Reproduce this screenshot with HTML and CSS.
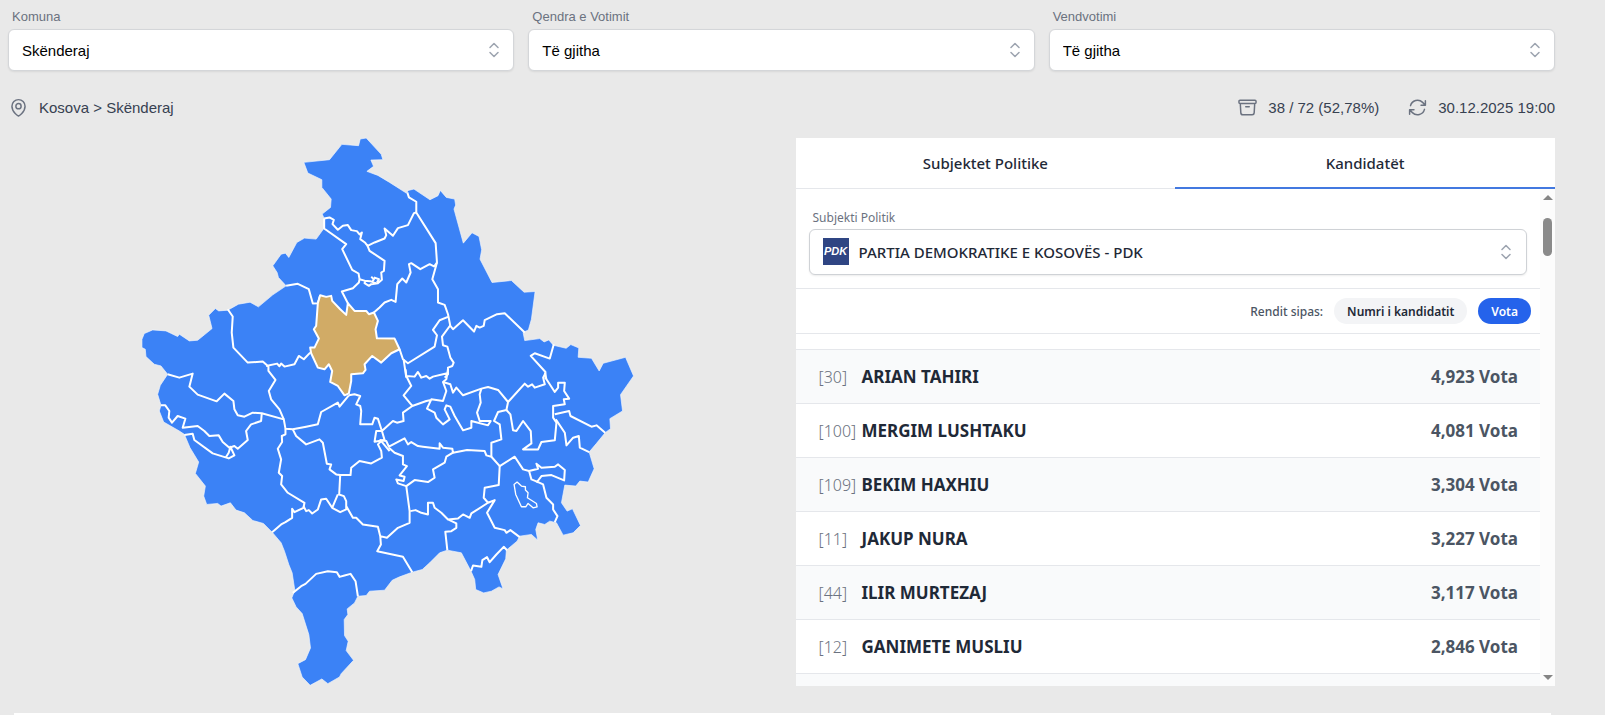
FILE: index.html
```html
<!DOCTYPE html>
<html lang="sq">
<head>
<meta charset="utf-8">
<title>Rezultatet - Skënderaj</title>
<link rel="stylesheet" href="styles.css">
</head>
<body>
<svg class="defs" aria-hidden="true">
  <symbol id="updown" viewBox="0 0 12 18"><path d="M2 6.500 6 2.500 10 6.500M2 11.500 6 15.500 10 11.500"/></symbol>
</svg>
<div class="page">
  <form class="filters">
    <div class="field">
      <label for="komuna">Komuna</label>
      <div class="control"><select id="komuna"><option>Skënderaj</option></select><svg class="updown"><use href="#updown"/></svg></div>
    </div>
    <div class="field">
      <label for="qendra">Qendra e Votimit</label>
      <div class="control"><select id="qendra"><option>Të gjitha</option></select><svg class="updown"><use href="#updown"/></svg></div>
    </div>
    <div class="field">
      <label for="vendi">Vendvotimi</label>
      <div class="control"><select id="vendi"><option>Të gjitha</option></select><svg class="updown"><use href="#updown"/></svg></div>
    </div>
  </form>

  <div class="status">
    <div class="item">
      <svg class="icon" viewBox="0 0 24 24"><path d="M15 10.500a3 3 0 1 1-6 0 3 3 0 0 1 6 0Z"/><path d="M19.500 10.500c0 7.142-7.500 11.250-7.500 11.250S4.500 17.642 4.500 10.500a7.500 7.500 0 1 1 15 0Z"/></svg>
      <span>Kosova &gt; Skënderaj</span>
    </div>
    <div class="item push">
      <svg class="icon" viewBox="0 0 24 24"><path d="m20.250 7.500-.625 10.632a2.250 2.250 0 0 1-2.247 2.118H6.622a2.250 2.250 0 0 1-2.247-2.118L3.750 7.500M10 11.250h4M3.375 7.500h17.250c.621 0 1.125-.504 1.125-1.125v-1.500c0-.621-.504-1.125-1.125-1.125H3.375c-.621 0-1.125.504-1.125 1.125v1.500c0 .621.504 1.125 1.125 1.125Z"/></svg>
      <span>38 / 72 (52,78%)</span>
    </div>
    <div class="item">
      <svg class="icon" viewBox="0 0 24 24"><path d="M16.023 9.348h4.992v-.001M2.985 19.644v-4.992m0 0h4.992m-4.993 0 3.181 3.183a8.250 8.250 0 0 0 13.803-3.700M4.031 9.865a8.250 8.250 0 0 1 13.803-3.700l3.181 3.182m0-4.991v4.990"/></svg>
      <span>30.12.2025 19:00</span>
    </div>
  </div>

  <main class="content">
    <svg class="map" viewBox="38 27 1473 1642" role="img" aria-label="Harta e Kosovës">
      <path class="land" d="M523,100 600,92 637,46 687,50 692,30 710,27 755,76 760,92 724,93 732,112 712,127 745,139 780,160 830,192 836,184 853,180 901,212 925,200 932,184 950,205 975,210 978,228 973,240 1001,342 1027,311 1048,322 1056,362 1051,390 1087,460 1145,454 1183,489 1216,487 1205,570 1196,602 1180,610 1185,634 1230,628 1243,638 1257,632 1271,648 1309,657 1323,646 1347,656 1345,684 1385,687 1408,725 1420,702 1487,684 1511,740 1472,796 1478,845 1440,868 1442,898 1426,910 1400,942 1378,968 1393,1018 1375,1058 1350,1055 1338,1070 1305,1067 1295,1120 1312,1145 1328,1138 1352,1188 1330,1210 1300,1217 1280,1180 1260,1175 1245,1185 1225,1180 1218,1200 1224,1232 1205,1215 1170,1220 1162,1235 1130,1262 1128,1288 1105,1335 1120,1378 1108,1372 1085,1385 1062,1390 1038,1380 1035,1350 1024,1325 995,1270 953,1262 930,1270 900,1300 878,1320 848,1328 810,1342 788,1352 765,1382 720,1385 710,1398 685,1400 675,1420 653,1438 655,1455 644,1470 645,1518 656,1535 650,1563 672,1592 635,1632 630,1642 595,1662 577,1648 542,1667 518,1642 505,1602 528,1590 543,1555 538,1515 518,1452 500,1432 487,1405 496,1382 488,1330 478,1305 465,1265 455,1240 428,1208 402,1182 370,1173 345,1150 320,1142 303,1120 275,1130 265,1122 232,1125 223,1100 228,1070 198,1032 208,998 182,955 165,915 150,905 103,878 90,845 95,828 85,795 93,768 115,735 95,710 75,705 50,682 48,660 38,655 38,630 45,613 70,602 110,605 145,622 150,615 180,635 205,633 248,598 238,558 258,538 268,545 295,543 327,525 362,519 387,533 430,497 470,470 447,445 443,430 430,410 455,375 468,372 478,385 502,340 525,327 560,330 583,298 584,268 578,255 603,235 605,210 577,175 577,152 535,132Z"/>
      <g class="borders">
        <path d="M584,268 600,265 613,272 609,285 625,302 640,290 655,288 665,303 682,306 690,316 697,310 692,330 706,340 714,350 735,340 765,328 770,318 765,298 790,320 805,297 835,288 853,252 860,250"/>
        <path d="M584,268V298L650,345 638,360 668,422 687,433 690,450 688,460 670,477 637,487 655,522M572,498 565,522 550,523 538,480 505,464 470,470"/>
        <path d="M714,350 720,365 765,395 763,425 755,430 757,452 745,462 725,465 718,470 705,462 707,455 690,450M705,455 722,456 738,462M725,443 733,450 728,458M733,445 748,450 742,460"/>
        <path d="M733,550 750,535 765,520 785,512 798,518 803,465 818,448 830,460 843,430 838,405 845,402 872,420 900,405 913,412 922,400"/>
        <path d="M295,540 310,562 307,610 312,655 355,700 400,697 417,712V725L438,752 418,785 425,810 450,840 463,870M410,710 443,703 450,711 455,703 465,712 495,705 508,680 523,690 542,670"/>
        <path d="M115,735 150,745 190,733 180,772 205,796 262,816 285,793 312,815 315,840 325,858 345,862 370,850 397,852 463,870 468,898 490,900 530,892 565,885 575,848 625,820 630,832 658,798"/>
        <path d="M95,828 108,828 120,845 118,865 128,880 145,860 168,868 160,895 205,890 225,905 240,920 268,918 280,938 300,955 315,950 325,958 355,932 350,905 365,885 395,875 397,852"/>
        <path d="M165,917 190,913 195,932 250,972 298,987 315,978 303,952 298,970 290,983"/>
        <path d="M468,898V915L457,920 458,938 445,958 455,990 448,1030 458,1040 455,1065 475,1090 525,1120 522,1135 495,1148 488,1138V1165L468,1178 455,1185 428,1208"/>
        <path d="M490,900 500,920 530,945 570,930 580,940 592,1003 605,1005 600,1020 620,1035 632,1037 663,1037 665,1015 690,995 725,1002 757,985 755,965 745,945 755,935 780,965"/>
        <path d="M632,1037 629,1095 643,1100 650,1115V1140L632,1148 608,1135 625,1095M522,1130 530,1145 538,1142 548,1152 565,1140 575,1110 590,1108 608,1135M650,1130 670,1165 680,1165 700,1185 745,1192 752,1220 772,1225 805,1195 840,1180V1145L830,1070M752,1220 754,1245 743,1265 820,1282 848,1328"/>
        <path d="M658,798 675,795 692,800 680,825 692,830 695,845 692,885 728,885 735,865 745,868 757,905 740,905 735,937 765,932 757,905 790,875 802,880 822,875 820,850 848,830"/>
      </g>
      <g class="borders" transform="translate(750 0)">
        <path d="M83,190 88,205 110,218V250L168,342 172,400 158,450 175,480V520L195,527 205,555 212,590 220,600 250,573 283,607 290,590 300,595 312,590 315,573 352,555 375,552 435,610"/>
        <path d="M205,563 180,573 160,602 172,618 165,652 85,702 70,690 60,660M72,690 80,745M212,588 187,622 190,648 203,652 212,685 222,700 218,710 205,715 205,735 195,745M522,645 510,688 465,672 453,680 497,728V750"/>
      </g>
      <g class="borders" transform="translate(750 720)">
        <path d="M78,0 80,20 95,50 72,78 98,110 140,95 155,92M80,20 105,22 115,8 125,25 140,20 150,28 160,22 190,15 203,12 205,0M203,12 200,30 190,38 200,65 190,95 155,90 142,118 165,130 170,145 190,165 210,150 195,120 200,108 212,112 225,140 250,183 275,175 275,155 325,168 333,155 300,155 292,130 303,100 300,75 305,58"/>
        <path d="M190,38 212,45 220,70 230,55 250,78 305,58 325,53 355,62 385,98 435,43 445,52 457,45 465,55 495,45 490,25 497,12M385,98 380,122 355,128 343,155 360,165 365,210 335,220V262"/>
        <path d="M380,122 392,135 400,183 410,185 430,155 453,185 455,222 430,240 475,240 485,218 525,213 530,160 520,145 520,110 555,105 552,90 568,88 553,65 555,40 535,40 535,55 525,68 500,30 495,10M525,135 568,125 572,140 635,172 650,168 676,190"/>
        <path d="M528,150 555,190 560,228 580,205 597,200 600,235 628,248M0,212 20,215 28,232 75,207 85,225 95,218 115,230 130,232 180,238 180,222 190,235 218,238 220,250 262,242 315,245 320,258 335,262 360,290 405,262 430,300 448,305"/>
        <path d="M448,305 455,330 475,338 490,345 500,385 520,405V420L533,440 525,458M448,305 475,298 470,283 485,295 525,292 535,285 555,302 553,333 515,317 485,320 470,340"/>
        <path d="M28,235 45,250 70,260 70,285 82,290 60,318 75,322 72,335 50,330 55,342 80,350 105,332 145,338 165,325 160,300 195,280 200,262 220,250"/>
        <path d="M360,290 357,347 315,355 312,385 325,400 345,392 322,430 345,475 375,482 380,490 392,482 420,503M325,400 275,432 270,445 250,435 235,447 205,450 185,430 165,415 160,400 145,400 145,435 125,430 108,422 92,425M205,450 230,462 230,475 215,485 197,487 203,542M274,605 280,588 305,592 308,572 322,563 330,578 350,555 372,532 382,542"/>
        <path class="thin" d="M403,345 412,338 425,350 437,352 437,362 445,370 443,385 470,402 472,412 460,415 445,402 438,412 425,412 408,375Z"/>
      </g>
      <path class="borders" d="M490,1390 515,1370 528,1363 560,1333 595,1325 622,1328 630,1342 645,1338 663,1333 678,1355 685,1400"/>
      <path class="picked" d="M572,498 565,522 560,590 553,600 568,628 555,655 542,655 545,672 565,715 585,720 598,705 608,725 602,758 625,770 645,798 658,792 665,755 665,735 700,732 708,722 705,705 728,680 755,700 785,672 810,660 795,628 742,627 738,600 745,575 733,550 718,555 710,545 675,545 655,522 650,557 632,540 608,515 605,500 590,503Z"/>
    </svg>

    <section class="panel">
      <nav class="tabs">
        <button type="button" class="tab">Subjektet Politike</button>
        <button type="button" class="tab active">Kandidatët</button>
      </nav>
      <div class="scroller">
        <div class="list">
          <div class="party">
            <label for="subjekti">Subjekti Politik</label>
            <div class="control">
              <span class="logo" aria-hidden="true">PDK</span>
              <select id="subjekti"><option>PARTIA DEMOKRATIKE E KOSOVËS - PDK</option></select>
              <svg class="updown"><use href="#updown"/></svg>
            </div>
          </div>
          <div class="sort">
            <span>Rendit sipas:</span>
            <button type="button" class="pill">Numri i kandidatit</button>
            <button type="button" class="pill on">Vota</button>
          </div>
          <table class="rows">
            <tbody>
              <tr><td class="num">[30]</td><td class="name">ARIAN TAHIRI</td><td class="votes">4,923 Vota</td></tr>
              <tr><td class="num">[100]</td><td class="name">MERGIM LUSHTAKU</td><td class="votes">4,081 Vota</td></tr>
              <tr><td class="num">[109]</td><td class="name">BEKIM HAXHIU</td><td class="votes">3,304 Vota</td></tr>
              <tr><td class="num">[11]</td><td class="name">JAKUP NURA</td><td class="votes">3,227 Vota</td></tr>
              <tr><td class="num">[44]</td><td class="name">ILIR MURTEZAJ</td><td class="votes">3,117 Vota</td></tr>
              <tr><td class="num">[12]</td><td class="name">GANIMETE MUSLIU</td><td class="votes">2,846 Vota</td></tr>
              <tr><td class="num"></td><td class="name"></td><td class="votes"></td></tr>
            </tbody>
          </table>
        </div>
        <div class="bar" aria-hidden="true">
          <svg class="arrow" viewBox="0 0 10 5"><path d="M0 5 5 0 10 5Z"/></svg>
          <span class="thumb"></span>
          <svg class="arrow last" viewBox="0 0 10 5"><path d="M0 0H10L5 5Z"/></svg>
        </div>
      </div>
    </section>
  </main>
  <section class="next"></section>
</div>
</body>
</html>
```
FILE: styles.css
```css
* { box-sizing: border-box; }
html { height: 100%; overflow: hidden; }
body {
  margin: 0;
  height: 100%;
  overflow: hidden;
  background: #e9e9e9;
  color: #1f2937;
  font-family: "Liberation Sans", Arial, sans-serif;
}
button, select { font: inherit; color: inherit; margin: 0; }
.defs { display: none; }
.page {
  display: flex;
  flex-direction: column;
  height: 100vh;
  padding: 8px 50px 0 8px;
}

.filters {
  display: grid;
  grid-template-columns: repeat(3, 1fr);
  gap: 14px;
}
.field label {
  display: block;
  padding-left: 4px;
  margin-bottom: 4px;
  font-size: 13px;
  line-height: 17px;
  color: #6b7280;
}
.control { position: relative; }
.control select {
  display: block;
  width: 100%;
  height: 42px;
  padding: 0 40px 0 13px;
  border: 1px solid #d4d6d9;
  border-radius: 6px;
  background: #fff;
  box-shadow: 0 1px 2px rgba(0, 0, 0, .08);
  font-size: 15px;
  color: #000;
  appearance: none;
}
.updown {
  position: absolute;
  top: 50%;
  right: 14px;
  width: 12px;
  height: 18px;
  margin-top: -9px;
  fill: none;
  stroke: #9ca3af;
  stroke-width: 1.5;
  stroke-linecap: round;
  stroke-linejoin: round;
  pointer-events: none;
}

.status {
  display: flex;
  align-items: center;
  gap: 28px;
  margin: 26px 0 20px;
  font-size: 15px;
  line-height: 20px;
  color: #374151;
}
.item { display: flex; align-items: center; gap: 10px; }
.push { margin-left: auto; }
.icon {
  width: 21px;
  height: 21px;
  fill: none;
  stroke: #6b7280;
  stroke-width: 1.7;
  stroke-linecap: round;
  stroke-linejoin: round;
}

.content {
  flex: 1;
  min-height: 0;
  display: grid;
  grid-template-columns: 1fr 1fr;
  grid-template-rows: 100%;
  gap: 28px;
}
.map { width: 100%; height: 100%; overflow: visible; }
.land { fill: #3b82f6; stroke: #f1f6fd; stroke-width: 2; stroke-linejoin: round; }
.borders { fill: none; stroke: #fff; stroke-width: 6; stroke-linejoin: round; }
.thin { stroke-width: 4; }
.picked { fill: #d1ab66; stroke: #fff; stroke-width: 6; stroke-linejoin: round; }

.panel {
  display: flex;
  flex-direction: column;
  min-width: 0;
  overflow: hidden;
  background: #fff;
  font-family: "Noto Sans", "Open Sans", sans-serif;
}
.tabs {
  display: grid;
  grid-template-columns: 1fr 1fr;
  flex: none;
  height: 51px;
  border-bottom: 1px solid #e5e7eb;
}
.tab {
  padding: 0;
  border: 0;
  background: none;
  font-size: 15px;
  font-weight: 500;
}
.active {
  margin-bottom: -1px;
  border-bottom: 2px solid #4379e0;
}
.scroller { flex: 1; min-height: 0; display: flex; }
.list { flex: 1; min-width: 0; overflow: hidden; }
.bar {
  flex: none;
  display: flex;
  flex-direction: column;
  align-items: center;
  width: 15px;
  padding: 6px 0;
  background: #fcfcfc;
}
.arrow { width: 10px; height: 5px; fill: #858585; }
.last { margin-top: auto; }
.thumb {
  width: 9px;
  height: 38px;
  margin-top: 18px;
  border-radius: 5px;
  background: #8a8a8a;
}

.party {
  padding: 20px 13px 13px;
  border-bottom: 1px solid #e5e7eb;
}
.party label {
  display: block;
  padding-left: 4px;
  margin-bottom: 3px;
  font-size: 12px;
  line-height: 17px;
  color: #6b7280;
}
.party select {
  height: 46px;
  padding-left: 49px;
  border-color: #cfd2d6;
  font-size: 15px;
  font-weight: 500;
  color: #1f2937;
}
.logo {
  position: absolute;
  top: 9px;
  left: 14px;
  width: 26px;
  height: 27px;
  background: #2f4583;
  color: #fff;
  font: italic bold 11px/27px "Liberation Sans", sans-serif;
  text-align: center;
}
.party .updown { right: 15px; }

.sort {
  display: flex;
  align-items: center;
  justify-content: flex-end;
  gap: 11px;
  height: 45px;
  padding-right: 9px;
  border-bottom: 1px solid #e5e7eb;
  font-size: 12px;
  font-weight: 500;
  color: #4b5563;
}
.pill {
  height: 26px;
  padding: 0 13px;
  border: 0;
  border-radius: 13px;
  background: #f3f4f6;
  color: #1f2937;
  font-weight: 600;
}
.on { background: #2563eb; color: #fff; }

.rows {
  width: 100%;
  margin-top: 15px;
  border-collapse: collapse;
  font-size: 17px;
}
.rows tr { height: 54px; border-top: 1px solid #e5e7eb; }
.rows tr:nth-child(odd) { background: #f9fafb; }
.rows td { padding: 0; }
.rows .num {
  width: 66px;
  padding-left: 23px;
  font-size: 16px;
  font-weight: 300;
  color: #6b7280;
}
.name { font-weight: 700; }
.rows .votes {
  padding-right: 22px;
  text-align: right;
  font-weight: 700;
  color: #4b5563;
}

.next {
  flex: none;
  height: 2px;
  margin: 27px 4px 0 6px;
  background: #fff;
}
```
